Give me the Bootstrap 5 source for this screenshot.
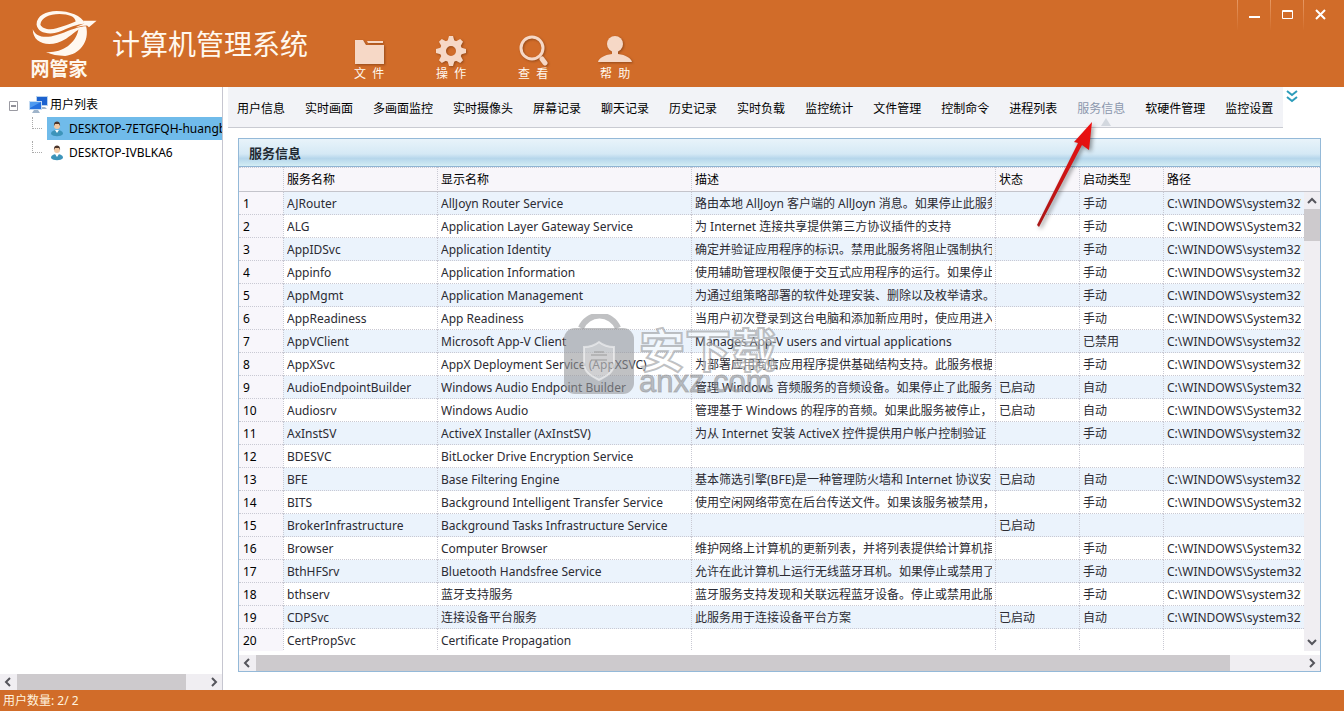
<!DOCTYPE html>
<html lang="zh-CN">
<head>
<meta charset="utf-8">
<meta name="viewport" content="width=device-width, initial-scale=1">
<title>计算机管理系统</title>
<link href="https://cdn.jsdelivr.net/npm/bootstrap@5.3.0/dist/css/bootstrap.min.css" rel="stylesheet">
<style>
  :root { --brand: #d16c29; --line: #c9c9d3; --frame: #94b9d8; }
  body { font: 12px/16px "Noto Sans", "Noto Sans CJK SC", sans-serif; color: #000; background: #fff; }
  button { background: none; border: 0; padding: 0; color: inherit; }
  a { color: inherit; text-decoration: none; }

  .topbar { background: var(--brand); height: 87px; color: #fff8ee; }
  .brand-mark { width: 86px; margin-left: 16px; padding-top: 9px; }
  .brand-name { font: 700 19px/20px "Noto Sans CJK SC", sans-serif; }
  .app-title { font: 400 28px/32px "Noto Sans CJK SC", sans-serif; margin: 27px 0 0 10px; }
  .tools { margin: 35px 0 0 20px; }
  .tool { width: 82px; }
  .tool svg { display: block; margin: 0 auto; filter: drop-shadow(1px 1px 1px rgba(90, 40, 10, .5)); }
  .tool span { white-space: pre; line-height: 16px; }
  .win-btn { width: 33px; height: 30px; border-left: 1px solid; border-image: linear-gradient(#e79a66, var(--brand)) 1; }

  .sidebar { width: 223px; border-right: 1px solid #c6c6d0; }
  .tree { padding-top: 6px; }
  .tree-row { height: 24px; }
  .tree-node { height: 23px; margin-left: 47px; padding: 1px 0 0 3px; gap: 5px; white-space: nowrap; overflow: hidden; }
  .tree-node.chosen { background: #70bbea; }
  .twig { position: absolute; left: 32px; top: 0; width: 10px; height: 12px; border: dotted #aaa; border-width: 0 0 1px 1px; }

  .tabs { height: 41px; background: #f2f3f7; border-bottom: 1px solid #c9cbd2; padding: 1px 10px 0 9px; gap: 20px; margin-left: 5px; }
  .tabs a { white-space: nowrap; position: relative; line-height: 41px; }
  .tabs a.current { color: #8c97ad; }
  .tabs a.current::after { content: ""; position: absolute; left: 24px; bottom: 1px; border: 5px solid transparent; border-bottom: 8px solid #d3d8df; border-top: 0; }

  .panel { border: 1px solid var(--frame); margin: 10px 23px 18px 15px; }
  .panel-title { height: 28px; margin: 0; padding-left: 10px; font: 700 13px/28px "Noto Sans CJK SC", sans-serif; color: #222a33; border-bottom: 1px solid #8fb4d3;
    background: linear-gradient(#e8f3fa, #d5e9f5 55%, #b6d6eb 72%, #d3edf4); }
  .grid { table-layout: fixed; width: 100%; border-collapse: separate; border-spacing: 0; }
  .grid th { height: 25px; font-weight: 400; background: #f8f6fa; border-top: 1px dotted var(--line); border-bottom: 1px solid #c4c4cb; padding: 2px 3px 0; line-height: 18px; }
  .grid td { height: 23px; padding: 0 3px; border-bottom: 1px dotted var(--line); color: #2b2b33; line-height: 22px; }
  .grid th + th, .grid td + td { border-left: 1px dotted var(--line); }
  .grid td span { display: block; overflow: hidden; white-space: nowrap; height: 22px; line-height: 24px; }
  .grid tbody tr:nth-child(odd) { background: #ebf3fc; }
  .grid td:first-child { background: #f8f6fb; color: #000; padding-left: 4px; }
  .grid tbody tr:last-child td { border-bottom-color: transparent; }

  .bar { background: #f0eef2; color: #55555c; }
  .bar-h { height: 16px; }
  .bar-v { width: 16px; }
  .bar svg, .bar button { display: block; flex: none; }
  .bar-h button { width: 17px; }
  .thumb { background: #cdcacd; }
  .statusbar { background: var(--brand); color: #fff3df; height: 21px; line-height: 22px; padding-left: 3px; }

  .overlay { position: absolute; pointer-events: none; }
  .watermark { left: 564px; top: 314px; color: rgba(150, 152, 155, .6); }
  .wm-cn { font: 700 46px/42px "Noto Sans CJK SC", sans-serif; color: rgba(255, 255, 255, .45); -webkit-text-stroke: 2px rgba(150, 152, 155, .6); }
  .wm-en { font: 400 31px/28px "Liberation Sans", sans-serif; -webkit-text-stroke: 1px rgba(150, 152, 155, .6); }
</style>
</head>
<body class="vh-100 d-flex flex-column overflow-hidden position-relative">

<header class="topbar d-flex flex-none">
  <div class="brand-mark text-center">
    <svg class="d-block ms-2 ps-1" width="84" height="49" viewBox="24 9 84 49" fill="#fff8f0">
      <path fill-rule="evenodd" d="M33 24C33 15 43 10 54 10c14 0 26 5 30 13-9 1-17 4-25 8-12 5-25 2-26-7Zm4 0c2 5 10 6 17 4 7-2 13-4 20-7 0-5-7-8-17-8-11 0-19 4-20 11Z"/>
      <path d="m82 20 14 0-8 7-2-2c-4 0-8 1-12 2 4-2 7-3 9-4Z"/>
      <path d="M29 29c3 8 13 10 25 6 12-3 18-8 31-9-8 2-13 8-21 13-16 10-35 6-35-10Z"/>
      <path d="M77 29c3-2 5-3 8-3 4 16-7 30-22 31-8 0-14-1-20-4 16 1 31-8 34-24Z"/>
    </svg>
    <div class="brand-name">网管家</div>
  </div>
  <h1 class="app-title text-nowrap">计算机管理系统</h1>
  <nav class="tools d-flex align-items-start">
    <button class="tool"><svg width="32" height="31" viewBox="0 0 32 31" fill="#f6d8c6"><path d="M2 5h8l3 5h18v19H2Z"/><path d="M14 6h16v2H15Z"/></svg><span>文  件</span></button>
    <button class="tool"><svg width="32" height="31" viewBox="0 0 32 31"><g fill="none" stroke="#f6d8c6"><circle cx="16" cy="16" r="8" stroke-width="6"/></g><g fill="#f6d8c6"><path id="cog" d="m12 8 2-7h4l2 7ZM12 24l2 7h4l2-7Z"/><use href="#cog" transform="rotate(45 16 16)"/><use href="#cog" transform="rotate(90 16 16)"/><use href="#cog" transform="rotate(135 16 16)"/></g></svg><span>操  作</span></button>
    <button class="tool"><svg width="32" height="31" viewBox="0 0 32 31" fill="none" stroke="#f6d8c6"><circle cx="15" cy="13" r="11" stroke-width="3"/><path d="m25 24 3 4" stroke-width="5" stroke-linecap="round"/></svg><span>查  看</span></button>
    <button class="tool"><svg width="34" height="31" viewBox="0 0 34 31" fill="#f6d8c6"><circle cx="17" cy="9" r="8"/><path d="M14 15h6v4c8 1 13 4 14 8H0c1-4 6-7 14-8Z"/></svg><span>帮  助</span></button>
  </nav>
  <div class="ms-auto d-flex align-items-start pe-1 me-1">
    <button class="win-btn" aria-label="最小化"><svg class="d-block" width="32" height="28" fill="none" stroke="#fff" stroke-width="2"><path d="M11 16h11"/></svg></button>
    <button class="win-btn" aria-label="最大化"><svg class="d-block" width="32" height="28" fill="none" stroke="#fff"><path d="M11.500 9.500h10v8h-10ZM11 10.500h11"/></svg></button>
    <button class="win-btn me-n1" aria-label="关闭"><svg class="d-block" width="32" height="28" fill="none" stroke="#fff" stroke-width="2"><path d="m12 9 9 9m0-9-9 9"/></svg></button>
  </div>
</header>

<div class="d-flex flex-grow-1 overflow-hidden">
  <aside class="sidebar flex-shrink-0 d-flex flex-column">
    <ul class="tree list-unstyled mb-auto">
      <li class="tree-row d-flex align-items-center">
        <button class="ms-2 me-2 pt-1" aria-label="折叠"><svg class="d-block" width="12" height="11" fill="#fff" stroke="#9a9aa2"><path d="M1.500.5h8v9h-8Z"/><path stroke="#223" d="M3 5h5"/></svg></button>
        <svg width="22" height="20" viewBox="0 0 22 20"><path d="M8 1h12v10H8Z" fill="#b9d3ee"/><path d="M9 2h10v8H9Z" fill="#1c62cf"/><path d="M12 12h5l2 2h-7Z" fill="#9fb4ca"/><path d="M1 6h13v9H1Z" fill="#c3daf2"/><path d="M2 7h11v7H2Z" fill="#2571df"/><path d="m2 7 11 0-11 6Z" fill="#4e9af0"/><path d="M6 15h4l2 3H4Z" fill="#9fb4ca"/></svg>
        <span>用户列表</span>
      </li>
      <li class="tree-row position-relative"><i class="twig"></i><a href="#" class="tree-node chosen d-flex align-items-center"><svg class="flex-shrink-0" width="14" height="16" viewBox="0 0 14 16"><path d="M1 13c0-3 3-4 6-4s6 1 6 4c-2 3-10 3-12 0Z" fill="#3d94ba"/><path d="m5 9 2 3 2-3Z" fill="#fff"/><circle cx="7" cy="5" r="3" fill="#f1c9a5"/><path d="M4 5c-1-6 7-6 6 0L9 3H5Z" fill="#4a342a"/></svg>DESKTOP-7ETGFQH-huangbin</a></li>
      <li class="tree-row position-relative"><i class="twig"></i><a href="#" class="tree-node d-flex align-items-center"><svg class="flex-shrink-0" width="14" height="16" viewBox="0 0 14 16"><path d="M1 13c0-3 3-4 6-4s6 1 6 4c-2 3-10 3-12 0Z" fill="#3d94ba"/><path d="m5 9 2 3 2-3Z" fill="#fff"/><circle cx="7" cy="5" r="3" fill="#f1c9a5"/><path d="M4 5c-1-6 7-6 6 0L9 3H5Z" fill="#4a342a"/></svg>DESKTOP-IVBLKA6</a></li>
    </ul>
    <div class="bar bar-h d-flex">
      <button aria-label="向左"><svg width="17" height="16" fill="none" stroke="currentColor" stroke-width="2"><path d="m10 4-4 4 4 4"/></svg></button>
      <div class="flex-grow-1"><div class="thumb h-100" style="width:90%"></div></div>
      <button aria-label="向右"><svg width="17" height="16" fill="none" stroke="currentColor" stroke-width="2"><path d="m7 4 4 4-4 4"/></svg></button>
    </div>
  </aside>

  <main class="flex-grow-1 d-flex flex-column overflow-hidden">
    <div class="d-flex align-items-start">
      <nav class="tabs d-flex">
        <a href="#">用户信息</a><a href="#">实时画面</a><a href="#">多画面监控</a><a href="#">实时摄像头</a><a href="#">屏幕记录</a><a href="#">聊天记录</a><a href="#">历史记录</a><a href="#">实时负载</a><a href="#">监控统计</a><a href="#">文件管理</a><a href="#">控制命令</a><a href="#">进程列表</a><a href="#" class="current" aria-current="page">服务信息</a><a href="#">软硬件管理</a><a href="#">监控设置</a>
      </nav>
      <button aria-label="更多"><svg class="d-block" width="18" height="18" fill="none" stroke="#2c9cba" stroke-width="2"><path d="m4 4 5 4 5-4M4 10l5 4 5-4"/></svg></button>
    </div>

    <section class="panel flex-grow-1 d-flex flex-column overflow-hidden">
      <h2 class="panel-title">服务信息</h2>
      <table class="grid">
        <colgroup><col style="width:44px"><col style="width:154px"><col style="width:254px"><col style="width:304px"><col style="width:84px"><col style="width:84px"><col></colgroup>
        <thead><tr><th aria-label="序号"></th><th>服务名称</th><th>显示名称</th><th>描述</th><th>状态</th><th>启动类型</th><th>路径</th></tr></thead>
      </table>
      <div class="d-flex flex-grow-1 overflow-hidden">
        <div class="flex-grow-1 overflow-hidden">
          <table class="grid">
            <colgroup><col style="width:44px"><col style="width:154px"><col style="width:254px"><col style="width:304px"><col style="width:84px"><col style="width:84px"><col></colgroup>
            <tbody id="services"></tbody>
          </table>
        </div>
        <div class="bar bar-v d-flex flex-column">
          <button aria-label="向上"><svg width="16" height="17" fill="none" stroke="currentColor" stroke-width="2"><path d="m4 11 4-4 4 4"/></svg></button>
          <div class="flex-grow-1"><div class="thumb" style="height:32px"></div></div>
          <button aria-label="向下"><svg width="16" height="17" fill="none" stroke="currentColor" stroke-width="2"><path d="m4 6 4 4 4-4"/></svg></button>
        </div>
      </div>
      <div class="bar bar-h d-flex mt-1 flex-shrink-0">
        <button aria-label="向左"><svg width="17" height="16" fill="none" stroke="currentColor" stroke-width="2"><path d="m10 4-4 4 4 4"/></svg></button>
        <div class="flex-grow-1"><div class="thumb h-100" style="width:93%"></div></div>
        <button aria-label="向右"><svg width="17" height="16" fill="none" stroke="currentColor" stroke-width="2"><path d="m7 4 4 4-4 4"/></svg></button>
      </div>
    </section>
  </main>
</div>

<footer class="statusbar flex-shrink-0">用户数量: 2/ 2</footer>

<div class="overlay watermark d-flex">
  <svg width="71" height="80" viewBox="0 0 71 80"><path d="M17 14a20 20 0 0 1 37 0" fill="none" stroke="currentColor" stroke-width="6"/><rect y="14" width="70" height="66" rx="11" fill="currentColor"/><path d="M35 28c5 4 10 5 15 5v17c0 8-7 12-15 16-8-4-15-8-15-16V33c5 0 10-1 15-5Z" fill="#fff" fill-opacity=".25" stroke="#fff" stroke-opacity=".5" stroke-width="2"/><path d="M27 41h16m-16 5h16m-13-8h10" stroke="#999" stroke-opacity=".5" stroke-width="2"/></svg>
  <div class="ms-1 pt-2 mt-1"><div class="wm-cn">安下载</div><div class="wm-en">anxz.com</div></div>
</div>

<svg class="overlay" style="left:1030px;top:115px" width="70" height="120" viewBox="0 0 70 120">
  <defs><linearGradient id="red" x1="0" y1="1" x2="1" y2="0"><stop offset="0" stop-color="#a81818"/><stop offset="1" stop-color="#f01010"/></linearGradient></defs>
  <g style="filter:drop-shadow(2px 2px 2px rgba(0,0,0,.4))"><path d="m7 110 41-82-4-1 18-20-3 28-7-5-43 82Z" fill="url(#red)"/></g>
</svg>

<script>
  const sys = "C:\\WINDOWS\\system32\\svchost.exe", Sys = "C:\\WINDOWS\\System32\\svchost.exe";
  const on = "已启动", man = "手动", auto = "自动";
  const services = [
    ["AJRouter", "AllJoyn Router Service", "路由本地 AllJoyn 客户端的 AllJoyn 消息。如果停止此服务", "", man, sys],
    ["ALG", "Application Layer Gateway Service", "为 Internet 连接共享提供第三方协议插件的支持", "", man, Sys],
    ["AppIDSvc", "Application Identity", "确定并验证应用程序的标识。禁用此服务将阻止强制执行", "", man, sys],
    ["Appinfo", "Application Information", "使用辅助管理权限便于交互式应用程序的运行。如果停止", "", man, sys],
    ["AppMgmt", "Application Management", "为通过组策略部署的软件处理安装、删除以及枚举请求。", "", man, sys],
    ["AppReadiness", "App Readiness", "当用户初次登录到这台电脑和添加新应用时，使应用进入", "", man, Sys],
    ["AppVClient", "Microsoft App-V Client", "Manages App-V users and virtual applications", "", "已禁用", sys],
    ["AppXSvc", "AppX Deployment Service (AppXSVC)", "为部署应用商店应用程序提供基础结构支持。此服务根据", "", man, sys],
    ["AudioEndpointBuilder", "Windows Audio Endpoint Builder", "管理 Windows 音频服务的音频设备。如果停止了此服务", on, auto, Sys],
    ["Audiosrv", "Windows Audio", "管理基于 Windows 的程序的音频。如果此服务被停止，", on, auto, Sys],
    ["AxInstSV", "ActiveX Installer (AxInstSV)", "为从 Internet 安装 ActiveX 控件提供用户帐户控制验证", "", man, sys],
    ["BDESVC", "BitLocker Drive Encryption Service", "", "", "", ""],
    ["BFE", "Base Filtering Engine", "基本筛选引擎(BFE)是一种管理防火墙和 Internet 协议安", on, auto, sys],
    ["BITS", "Background Intelligent Transfer Service", "使用空闲网络带宽在后台传送文件。如果该服务被禁用，", "", man, Sys],
    ["BrokerInfrastructure", "Background Tasks Infrastructure Service", "", on, "", ""],
    ["Browser", "Computer Browser", "维护网络上计算机的更新列表，并将列表提供给计算机指", "", man, Sys],
    ["BthHFSrv", "Bluetooth Handsfree Service", "允许在此计算机上运行无线蓝牙耳机。如果停止或禁用了", "", man, Sys],
    ["bthserv", "蓝牙支持服务", "蓝牙服务支持发现和关联远程蓝牙设备。停止或禁用此服", "", man, sys],
    ["CDPSvc", "连接设备平台服务", "此服务用于连接设备平台方案", on, auto, sys],
    ["CertPropSvc", "Certificate Propagation", "", "", "", ""]
  ];
  const body = document.getElementById("services");
  services.forEach((row, i) => {
    const tr = body.insertRow();
    [i + 1, ...row].forEach(text => {
      const cell = document.createElement("span");
      cell.textContent = text;
      tr.insertCell().append(cell);
    });
  });
</script>
<script src="https://cdn.jsdelivr.net/npm/bootstrap@5.3.0/dist/js/bootstrap.bundle.min.js"></script>
</body>
</html>
